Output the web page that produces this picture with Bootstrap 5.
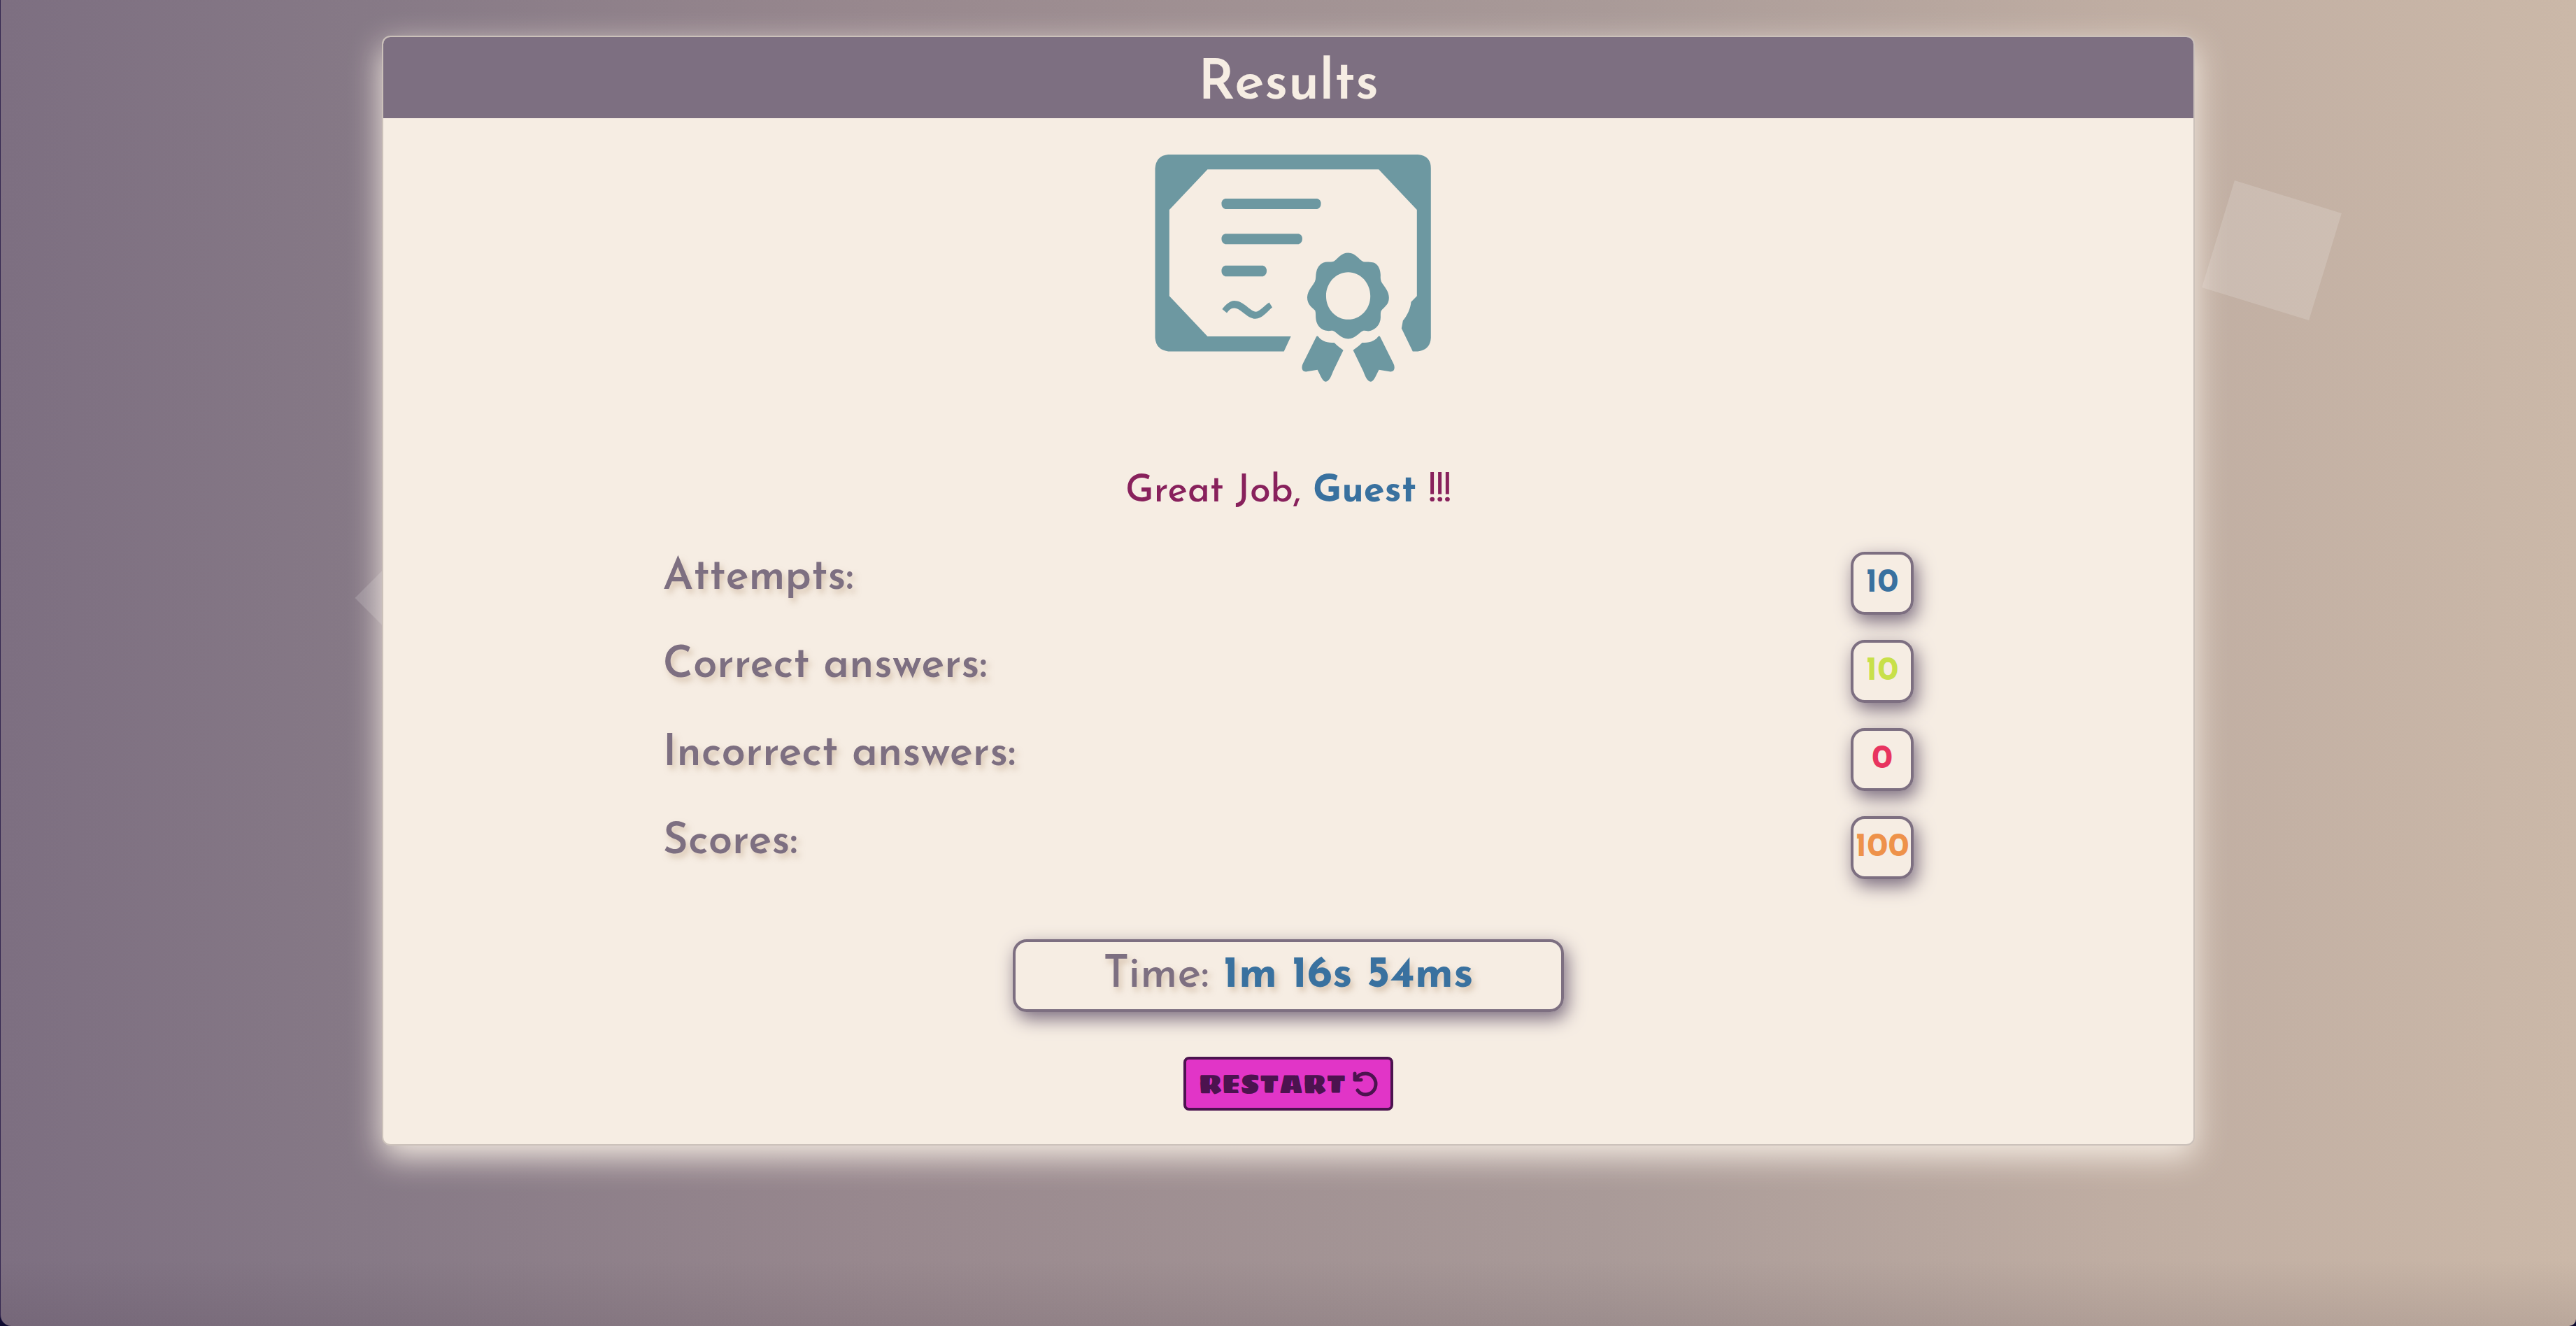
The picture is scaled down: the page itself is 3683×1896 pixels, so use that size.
<!DOCTYPE html>
<html lang="en">
<head>
<meta charset="utf-8">
<meta name="viewport" content="width=device-width, initial-scale=1">
<title>Results</title>
<link rel="stylesheet" href="https://cdn.jsdelivr.net/npm/bootstrap@5.3.0/dist/css/bootstrap.min.css">
<style>
:root { --plum:#7d6f81; --cream:#f6ede3; --sea:#39719f; }
html { background:#0e0a30; }
body { font-family:"Josefin Sans", Lato, sans-serif; color:var(--plum); background:#0e0a30; }
.stage { overflow:hidden; border-left:1px solid #33264f; border-radius:0 0 10px 16px; padding-top:51px;
  background:linear-gradient(to bottom, transparent 95%, rgba(60,45,60,.12)), linear-gradient(90deg, #7d6f81 0%, #867986 14%, #98888e 34%, #a99a98 62%, #bfada2 82%, #cbb8a8 100%); }
.floater { background:rgba(255,255,255,.16); }
.floater-a { width:160px; height:160px; left:3167px; top:278px; transform:rotate(17deg); }
.floater-b { width:80px; height:80px; left:523px; top:815px; transform:rotate(45deg); }
.result-card { width:70.4%; border:2px solid #cbc1ba; border-radius:12px; background:var(--cream); box-shadow:0 16px 46px var(--cream); color:inherit; overflow:hidden; }
.result-head { background:var(--plum); color:var(--cream); padding-top:20px; font-size:80px; line-height:96px; font-weight:600; }
.result-body { padding:52px 0 48px; }
.praise { font-size:54px; line-height:60px; margin:128px 0 55px; color:#88215c; font-weight:500; }
.text-sea { color:var(--sea); }
.text-lime { color:#c8e04a; }
.text-rose { color:#e8345f; }
.text-amber { color:#ee924a; }
.stats { width:69.1%; gap:36px; }
.stat-label { font-size:62px; font-weight:600; line-height:76px; }
.stat-label, .time-box { text-shadow:4px 6px 8px rgba(190,160,130,.5); }
.tile, .time-box { border:4px solid var(--plum); border-radius:20px; box-shadow:5px 10px 26px var(--plum); }
.tile { width:90px; height:90px; font-size:48px; line-height:82px; font-weight:700; }
.time-box { width:788px; margin:86px 0 64px; font-size:64px; font-weight:500; line-height:96px; }
.restart { width:300px; height:77px; padding:0; gap:10px; border:4px solid #4c134f; border-radius:8px; background:#e135c7; color:#4c134f; font:38px/69px "Sigmar One", "DejaVu Sans", sans-serif; }
.restart:hover { background:#c92bb1; color:#4c134f; }
</style>
</head>
<body>
<main class="stage position-relative vh-100">
  <div class="floater floater-a position-absolute"></div>
  <div class="floater floater-b position-absolute"></div>
  <section class="card result-card mx-auto">
    <h1 class="result-head text-center m-0">Results</h1>
    <div class="result-body d-flex flex-column align-items-center">
      <svg width="408" height="325" viewBox="54 63 1224 976" fill="#6d98a1" role="img" aria-label="Certificate">
        <path fill-rule="evenodd" d="M150 63H1222Q1278 68 1278 122V850Q1275 902 1222 908H1200L1152 809L1158 776C1176 755 1190 727 1193 696L1218 670V300L1054 127H319L155 300V670L319 844H677L647 908H150Q98 902 94 850V122Q98 68 150 63Z"/>
        <path d="M395 252H790Q806 256 806 274T790 297H395Q379 292 379 274T395 252ZM395 403H710Q726 407 726 425T710 448H395Q379 443 379 425T395 403ZM395 540H557Q573 545 573 563T557 586H395Q379 581 379 563T395 540Z"/>
        <path d="M382 727C396 709 415 691 434 691C474 691 502 737 525 738C542 738 566 709 584 698L597 719C576 736 553 768 525 768C489 768 462 722 433 722C419 722 411 731 402 743Z"/>
        <path fill-rule="evenodd" d="M923 485C955 485 968 514 988 523C1001 525 1018 522 1035 528C1055 539 1061 559 1062 580C1061 594 1062 603 1068 614C1082 634 1098 652 1098 678C1098 709 1077 717 1064 735C1060 745 1064 759 1061 774C1055 801 1033 819 1009 821C1001 821 994 818 987 820C967 829 954 854 923 854C891 854 878 829 858 820C850 818 843 821 834 820C807 818 790 799 785 774C782 759 785 745 781 733C767 719 747 708 747 676C749 646 770 628 780 608C785 596 783 581 786 568C792 540 809 525 834 524C844 524 855 525 862 521C879 510 893 485 923 485ZM923 568C871 568 828 613 828 670S871 771 923 771S1018 727 1018 670S975 568 923 568Z"/>
        <path id="ribbon" d="M786 845Q790 839 795 845C811 866 835 871 863 871C875 884 889 894 902 903L858 994C850 1015 841 1038 827 1038C814 1038 806 1017 791 987L745 995Q719 997 726 967Q729 959 734 950Z"/>
        <use href="#ribbon" transform="matrix(-1 0 0 1 1846 0)"/>
      </svg>
      <p class="praise">Great Job, <strong class="text-sea">Guest</strong> !!!</p>
      <div class="stats d-flex flex-column">
        <div class="d-flex justify-content-between align-items-start"><span class="stat-label">Attempts:</span><span class="tile text-center text-sea">10</span></div>
        <div class="d-flex justify-content-between align-items-start"><span class="stat-label">Correct answers:</span><span class="tile text-center text-lime">10</span></div>
        <div class="d-flex justify-content-between align-items-start"><span class="stat-label">Incorrect answers:</span><span class="tile text-center text-rose">0</span></div>
        <div class="d-flex justify-content-between align-items-start"><span class="stat-label">Scores:</span><span class="tile text-center text-amber">100</span></div>
      </div>
      <div class="time-box text-center">Time: <strong class="text-sea">1m 16s 54ms</strong></div>
      <button type="button" class="btn restart d-flex align-items-center justify-content-center">RESTART
        <svg width="36" height="36" viewBox="0 0 36 36" fill="none" stroke="currentColor" stroke-width="5" stroke-linecap="round" stroke-linejoin="round" aria-hidden="true"><path d="M3 3V12H12M4 11C8 5 13 3 18 3C27 3 33 10 33 18S27 33 18 33C13 33 10 31 7 27"/></svg>
      </button>
    </div>
  </section>
</main>
<script src="https://cdn.jsdelivr.net/npm/bootstrap@5.3.0/dist/js/bootstrap.bundle.min.js"></script>
</body>
</html>
